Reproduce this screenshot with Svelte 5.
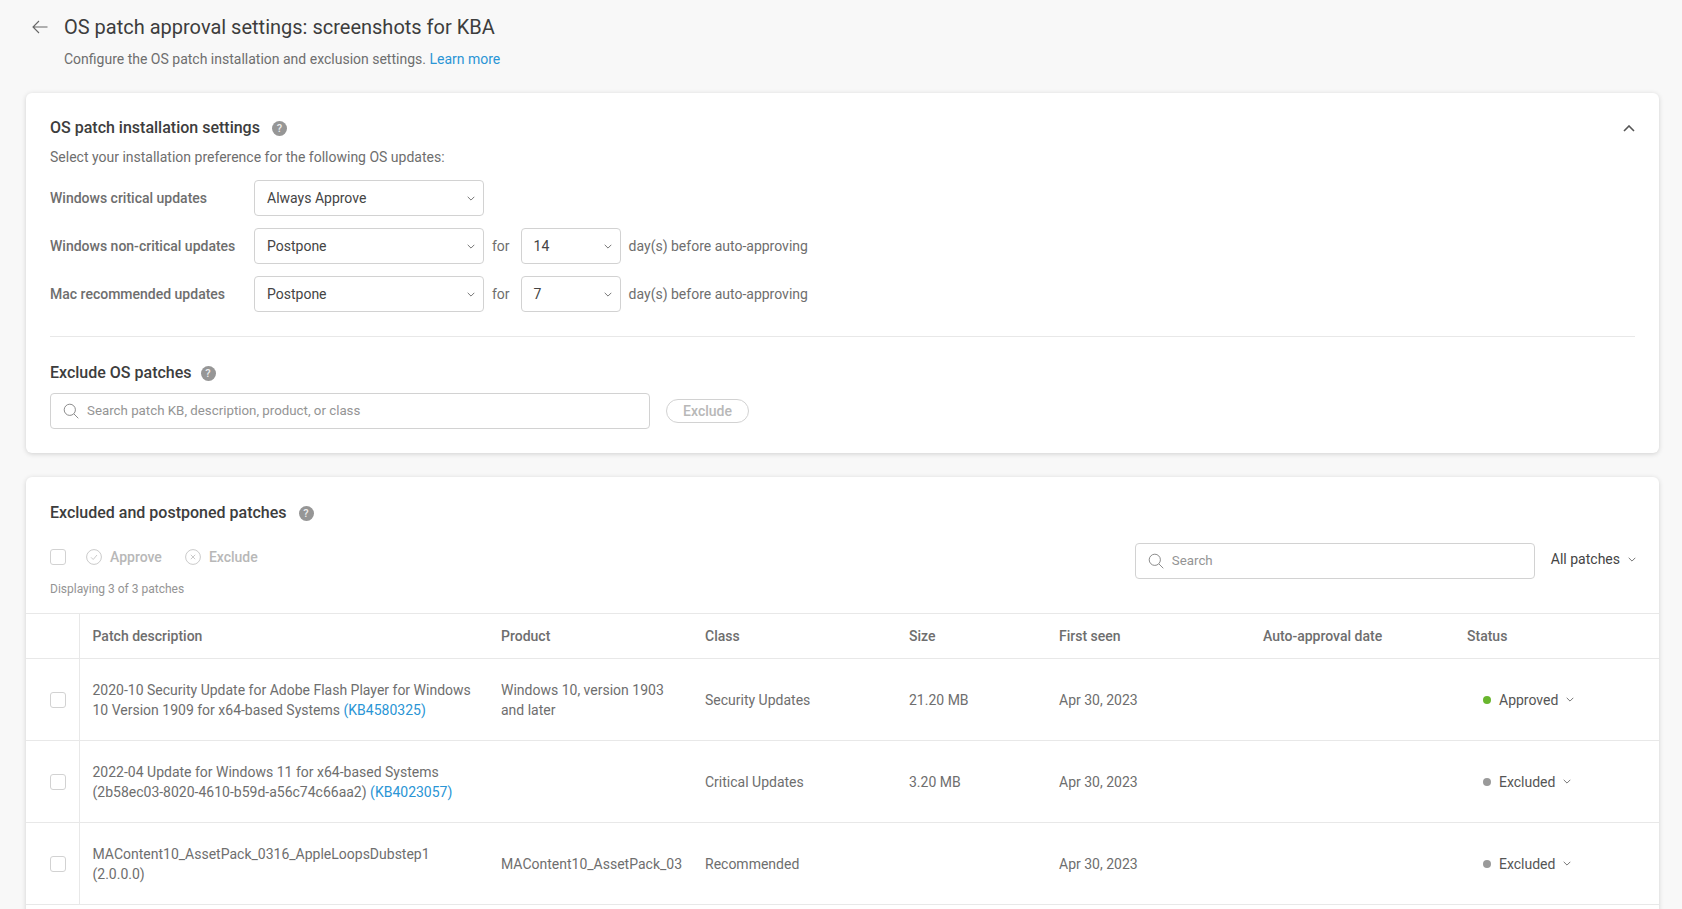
<script>
	const settings = [
		{ label: "Windows critical updates", value: "Always Approve" },
		{ label: "Windows non-critical updates", value: "Postpone", days: "14" },
		{ label: "Mac recommended updates", value: "Postpone", days: "7" }
	];

	const columns = ["", "Patch description", "Product", "Class", "Size", "First seen", "Auto-approval date", "Status"];

	const patches = [
		{
			desc: ["2020-10 Security Update for Adobe Flash Player for Windows", "10 Version 1909 for x64-based Systems"],
			kb: "(KB4580325)",
			product: "Windows 10, version 1903 and later",
			cls: "Security Updates",
			size: "21.20 MB",
			seen: "Apr 30, 2023",
			status: "Approved"
		},
		{
			desc: ["2022-04 Update for Windows 11 for x64-based Systems", "(2b58ec03-8020-4610-b59d-a56c74c66aa2)"],
			kb: "(KB4023057)",
			product: "",
			cls: "Critical Updates",
			size: "3.20 MB",
			seen: "Apr 30, 2023",
			status: "Excluded"
		},
		{
			desc: ["MAContent10_AssetPack_0316_AppleLoopsDubstep1", "(2.0.0.0)"],
			kb: "",
			product: "MAContent10_AssetPack_03",
			cls: "Recommended",
			size: "",
			seen: "Apr 30, 2023",
			status: "Excluded"
		}
	];
</script>

{#snippet chevron()}
	<svg class="chevron" viewBox="0 0 8 5" width="8" height="5"><path d="M.7.8 4 4.1 7.3.8" /></svg>
{/snippet}

{#snippet help()}
	<span class="help">?</span>
{/snippet}

{#snippet searchIcon()}
	<svg class="search-icon" viewBox="0 0 16 16" width="16" height="16"><circle cx="6.8" cy="6.8" r="5.6" /><path d="m10.9 10.9 4.4 4.4" /></svg>
{/snippet}

<div class="page">
	<header class="page-head">
		<div class="title-row">
			<svg class="back" viewBox="0 0 16 14" width="16" height="14"><path d="M15.5 7H1M7 1 1 7l6 6" /></svg>
			<h1>OS patch approval settings: screenshots for KBA</h1>
		</div>
		<p class="subtitle">Configure the OS patch installation and exclusion settings. <a href="#top">Learn more</a></p>
	</header>

	<section class="card install">
		<div class="heading-row">
			<h2>OS patch installation settings</h2>
			{@render help()}
			<svg class="collapse" viewBox="0 0 12 7" width="12" height="7"><path d="M1 6 6 1l5 5" /></svg>
		</div>
		<p class="hint">Select your installation preference for the following OS updates:</p>

		<div class="settings">
			{#each settings as row}
				<div class="setting">
					<span class="setting-label">{row.label}</span>
					<div class="dropdown wide">{row.value}{@render chevron()}</div>
					{#if row.days}
						<span class="for">for</span>
						<div class="dropdown narrow">{row.days}{@render chevron()}</div>
						<span>day(s) before auto-approving</span>
					{/if}
				</div>
			{/each}
		</div>

		<hr />

		<div class="heading-row exclude-head">
			<h2>Exclude OS patches</h2>
			{@render help()}
		</div>
		<div class="exclude-row">
			<div class="search patch-search">{@render searchIcon()}<span>Search patch KB, description, product, or class</span></div>
			<button class="exclude-btn">Exclude</button>
		</div>
	</section>

	<section class="card patches">
		<div class="heading-row patches-head">
			<h2>Excluded and postponed patches</h2>
			{@render help()}
		</div>

		<div class="toolbar">
			<div>
				<div class="actions">
					<span class="check head-check"></span>
					<span class="action">
						<svg viewBox="0 0 16 16" width="16" height="16"><circle cx="8" cy="8" r="7.4" /><path d="m5 8.3 2.2 2.2L11 6" /></svg>
						Approve
					</span>
					<span class="action">
						<svg viewBox="0 0 16 16" width="16" height="16"><circle cx="8" cy="8" r="7.4" /><path d="m5.8 5.8 4.4 4.4m0-4.4-4.4 4.4" /></svg>
						Exclude
					</span>
				</div>
				<div class="count">Displaying 3 of 3 patches</div>
			</div>
			<div class="filters">
				<div class="search table-search">{@render searchIcon()}<span>Search</span></div>
				<div class="all-patches">All patches{@render chevron()}</div>
			</div>
		</div>

		<table>
			<colgroup>
				<col class="c-check" /><col class="c-desc" /><col class="c-product" /><col class="c-class" />
				<col class="c-size" /><col class="c-seen" /><col class="c-auto" /><col class="c-status" />
			</colgroup>
			<thead>
				<tr>
					{#each columns as col}
						<th>{col}</th>
					{/each}
				</tr>
			</thead>
			<tbody>
				{#each patches as p}
					<tr>
						<td class="check-cell"><span class="check"></span></td>
						<td>
							<div>{p.desc[0]}</div>
							<div>{p.desc[1]} {#if p.kb}<a href="#top">{p.kb}</a>{/if}</div>
						</td>
						<td>{p.product}</td>
						<td>{p.cls}</td>
						<td>{p.size}</td>
						<td>{p.seen}</td>
						<td></td>
						<td>
							<span class="status">
								<span class="dot" class:ok={p.status === "Approved"}></span>
								{p.status}{@render chevron()}
							</span>
						</td>
					</tr>
				{/each}
			</tbody>
		</table>
	</section>
</div>

<style>
	:global(body) {
		margin: 0;
		background: #f8f8f8;
		overflow: hidden;
	}

	.page {
		height: 909px;
		padding: 0 23px 0 26px;
		font-family: Roboto, "Liberation Sans", sans-serif;
		font-size: 14px;
		line-height: 20px;
		color: #6e6e6e;
		overflow: hidden;
	}

	a {
		color: #2a95d5;
		text-decoration: none;
	}

	.page-head {
		height: 93px;
		padding-top: 14px;
		box-sizing: border-box;
	}

	.title-row {
		display: flex;
		align-items: center;
		height: 26px;
	}

	.back {
		margin: 0 16px 0 6px;
		fill: none;
		stroke: #666;
		stroke-width: 1.1;
	}

	h1 {
		margin: 0;
		font-size: 20px;
		font-weight: 400;
		color: #3d3d3d;
	}

	.subtitle {
		margin: 9px 0 0 38px;
	}

	.card {
		background: #fff;
		border-radius: 6px;
		box-shadow: 0 1px 5px rgba(0, 0, 0, 0.16);
	}

	.install {
		padding: 25px 24px 24px;
	}

	.heading-row {
		display: flex;
		align-items: center;
		height: 20px;
		gap: 12px;
	}

	h2 {
		margin: 0;
		font-size: 16px;
		font-weight: 500;
		color: #3d3d3d;
	}

	.help {
		width: 15px;
		height: 15px;
		border-radius: 50%;
		background: #969696;
		color: #eee;
		font-size: 11px;
		font-weight: 500;
		line-height: 15px;
		text-align: center;
	}

	.collapse {
		margin-left: auto;
		fill: none;
		stroke: #555;
		stroke-width: 1.6;
	}

	.hint {
		margin: 9px 0 13px;
	}

	.settings {
		display: flex;
		flex-direction: column;
		gap: 12px;
	}

	.setting {
		display: flex;
		align-items: center;
		height: 36px;
	}

	.setting-label {
		width: 204px;
		font-weight: 500;
	}

	.dropdown {
		display: flex;
		align-items: center;
		justify-content: space-between;
		box-sizing: border-box;
		height: 36px;
		padding: 0 8px 0 12px;
		border: 1px solid #d2d2d2;
		border-radius: 4px;
		color: #444;
	}

	.wide {
		width: 230px;
	}

	.narrow {
		width: 100px;
		margin-right: 8px;
	}

	.for {
		margin: 0 11px 0 8px;
	}

	.chevron {
		flex: none;
		fill: none;
		stroke: #777;
		stroke-width: 1;
	}

	hr {
		margin: 24px 0 26px;
		border: 0;
		border-top: 1px solid #e8e8e8;
	}

	.exclude-head {
		gap: 9px;
		margin-bottom: 10px;
	}

	.exclude-row {
		display: flex;
		align-items: center;
		gap: 16px;
	}

	.search {
		display: flex;
		align-items: center;
		gap: 8px;
		box-sizing: border-box;
		height: 36px;
		padding: 0 12px;
		border: 1px solid #d2d2d2;
		border-radius: 4px;
		color: #949494;
		font-size: 13.3px;
	}

	.search-icon {
		flex: none;
		fill: none;
		stroke: #8c8c8c;
		stroke-width: 1;
	}

	.patch-search {
		width: 600px;
	}

	.table-search {
		width: 400px;
	}

	.exclude-btn {
		width: 83px;
		height: 24px;
		padding: 0;
		border: 1px solid #d2d2d2;
		border-radius: 12px;
		background: #fff;
		color: #b8b8b8;
		font: 500 14px/20px Roboto, sans-serif;
	}

	.patches {
		margin-top: 24px;
		padding-top: 26px;
		padding-bottom: 40px;
	}

	.patches-head {
		padding: 0 24px;
	}

	.toolbar {
		display: flex;
		justify-content: space-between;
		margin-top: 20px;
		padding: 0 23px 0 24px;
	}

	.actions {
		display: flex;
		align-items: center;
		height: 28px;
		color: #b8b8b8;
	}

	.check {
		display: block;
		box-sizing: border-box;
		width: 16px;
		height: 16px;
		border: 1px solid #d2d2d2;
		border-radius: 3px;
	}

	.head-check {
		margin-right: 20px;
	}

	.action {
		display: flex;
		align-items: center;
		gap: 8px;
		margin-right: 23px;
		font-weight: 500;
	}

	.action svg {
		fill: none;
		stroke: #c4c4c4;
		stroke-width: 0.9;
	}

	.count {
		margin-top: 9px;
		font-size: 12px;
		line-height: 18px;
		color: #949494;
	}

	.filters {
		display: flex;
		align-items: flex-start;
		gap: 16px;
	}

	.all-patches {
		display: flex;
		align-items: center;
		gap: 8px;
		margin-top: 6px;
		color: #444;
	}

	table {
		width: 1633px;
		margin-top: 15px;
		border-collapse: collapse;
		table-layout: fixed;
		border-top: 1px solid #e8e8e8;
	}

	.c-check { width: 53px; }
	.c-desc { width: 410px; }
	.c-product { width: 204px; }
	.c-class { width: 204px; }
	.c-size { width: 150px; }
	.c-seen { width: 204px; }
	.c-auto { width: 204px; }
	.c-status { width: 204px; }

	th {
		height: 45px;
		padding: 0 12px;
		box-sizing: border-box;
		border-bottom: 1px solid #e8e8e8;
		font-weight: 500;
		text-align: left;
	}

	td {
		height: 82px;
		padding: 0 12px;
		box-sizing: border-box;
		border-bottom: 1px solid #e8e8e8;
	}

	th:nth-child(2),
	td:nth-child(2) {
		padding-left: 13px;
	}

	th:first-child,
	td:first-child {
		border-right: 1px solid #e8e8e8;
	}

	.check-cell {
		padding: 0 0 0 24px;
	}

	.status {
		display: flex;
		align-items: center;
		padding-left: 16px;
		color: #555;
	}

	.status .chevron {
		margin-left: 8px;
	}

	.dot {
		width: 8px;
		height: 8px;
		margin-right: 8px;
		border-radius: 50%;
		background: #9a9a9a;
	}

	.dot.ok {
		background: #69b62e;
	}
</style>
